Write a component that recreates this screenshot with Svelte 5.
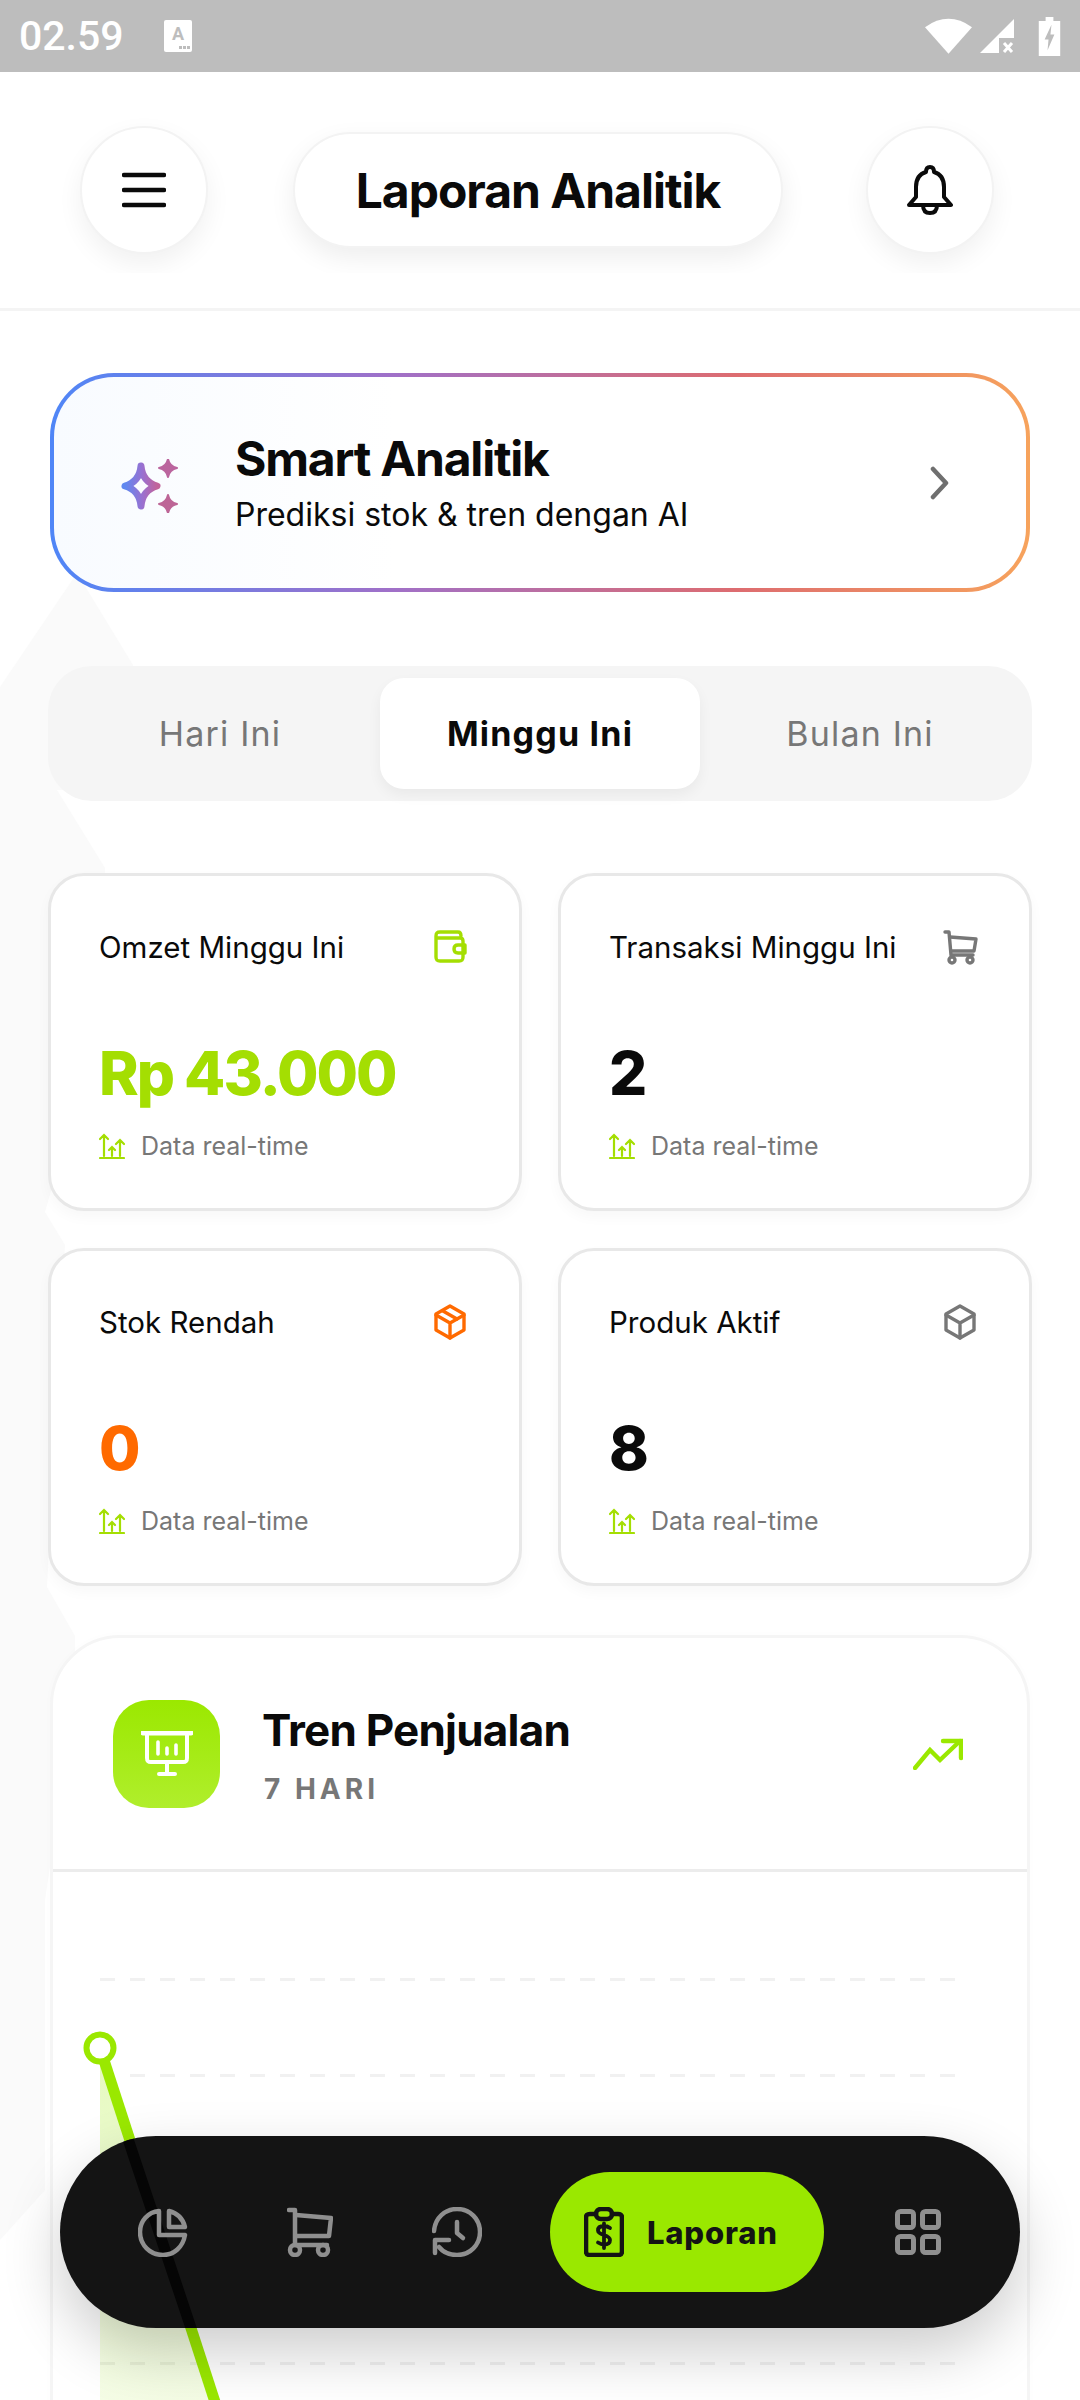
<script lang="ts">
	const tabs = ['Hari Ini', 'Minggu Ini', 'Bulan Ini'];
	const activeTab = 'Minggu Ini';

	const stats = [
		{ label: 'Omzet Minggu Ini', value: 'Rp 43.000', icon: 'wallet', tone: 'green' },
		{ label: 'Transaksi Minggu Ini', value: '2', icon: 'cart', tone: 'plain' },
		{ label: 'Stok Rendah', value: '0', icon: 'box-open', tone: 'orange' },
		{ label: 'Produk Aktif', value: '8', icon: 'box', tone: 'plain' }
	];

	const gridLines = [1, 2, 3, 4, 5];
</script>

<div class="page">
	<svg class="backdrop" viewBox="0 0 1080 2400" aria-hidden="true">
		<path d="M0 687 L77 573 L133 665 L133 790 L57 790 L105 868 L105 1000 L45 1212 L65 1245 L47 1587 L75 1636 L75 1700 L45 1900 L45 2190 L0 2240 Z" />
	</svg>

	<div class="statusbar">
		<span class="time">02.59</span>
		<svg class="sim" viewBox="0 0 28 32" aria-hidden="true">
			<rect width="28" height="32" rx="2" fill="#fff" />
			<text x="14" y="20" text-anchor="middle" class="sim-a">A</text>
			<rect x="15" y="26" width="3" height="3" fill="#bdbdbd" />
			<rect x="19" y="26" width="3" height="3" fill="#bdbdbd" />
			<rect x="23" y="26" width="3" height="3" fill="#bdbdbd" />
		</svg>
		<span class="spacer"></span>
		<svg class="wifi" viewBox="0 0 48 36" aria-hidden="true">
			<path d="M0 9 Q24 -8 48 9 L24 36 Z" fill="#fff" />
		</svg>
		<svg class="signal" viewBox="0 0 34 34" aria-hidden="true">
			<path d="M0 34 L34 0 V19 H19 V34 Z" fill="#fff" />
			<path d="M24 24 L32 33 M32 24 L24 33" stroke="#fff" stroke-width="3" />
		</svg>
		<svg class="battery" viewBox="0 0 22 40" aria-hidden="true">
			<path d="M7 0 H15 V4 H22 V40 H0 V4 H7 Z" fill="#fff" />
			<path d="M13 8 L6 23 H10 L9 34 L16 18 H12 Z" fill="#bdbdbd" />
		</svg>
	</div>

	<header>
		<div class="header-row">
			<button class="round" aria-label="Menu">
				<svg viewBox="0 0 44 36" width="44" height="36" aria-hidden="true">
					<path d="M2 3 H42 M2 18 H42 M2 33 H42" stroke="#0a0a0a" stroke-width="4.5" stroke-linecap="round" />
				</svg>
			</button>
			<div class="title-pill">Laporan Analitik</div>
			<button class="round" aria-label="Notifikasi">
				<svg viewBox="0 0 46 50" width="46" height="50" aria-hidden="true" fill="none" stroke="#0a0a0a" stroke-width="4" stroke-linejoin="round" stroke-linecap="round">
					<path d="M23 2 C26 2 27 4 27 7 C34 9 37 15 37 22 V32 L44 40 H2 L9 32 V22 C9 15 12 9 19 7 C19 4 20 2 23 2 Z" />
					<path d="M16 40 C16 46 19 48 23 48 C27 48 30 46 30 40" />
				</svg>
			</button>
		</div>
	</header>

	<main>
		<section class="smart">
			<div class="smart-inner">
				<svg class="sparkles" viewBox="0 0 60 54" width="60" height="54" aria-hidden="true">
					<defs>
						<linearGradient id="spark" x1="0" y1="0" x2="1" y2="0">
							<stop offset="0" stop-color="#5f88f0" />
							<stop offset="0.55" stop-color="#9a70d0" />
							<stop offset="1" stop-color="#c2639a" />
						</linearGradient>
					</defs>
					<path fill="none" stroke="url(#spark)" stroke-width="7" stroke-linejoin="round" stroke-linecap="round" d="M21 7 C22 18 27 24 37 27 C27 30 22 36 21 47 C20 36 15 30 5 27 C15 24 20 18 21 7 Z" />
					<path fill="#bb659e" d="M48 0 C49 5 52 8 57 9 C52 10 49 13 48 18 C47 13 44 10 39 9 C44 8 47 5 48 0 Z" stroke="#bb659e" stroke-width="2" stroke-linejoin="round" />
					<path fill="#bd6596" d="M48 36 C49 41 52 44 57 45 C52 46 49 49 48 54 C47 49 44 46 39 45 C44 44 47 41 48 36 Z" stroke="#bd6596" stroke-width="2" stroke-linejoin="round" />
				</svg>
				<div class="smart-text">
					<h2>Smart Analitik</h2>
					<p>Prediksi stok &amp; tren dengan AI</p>
				</div>
				<svg class="chevron" viewBox="0 0 20 34" width="20" height="34" aria-hidden="true">
					<path d="M3 3 L16 17 L3 31" fill="none" stroke="#6f6f6f" stroke-width="4.5" stroke-linecap="round" stroke-linejoin="round" />
				</svg>
			</div>
		</section>

		<div class="tabs">
			{#each tabs as tab}
				<button class="tab" class:active={tab === activeTab}>{tab}</button>
			{/each}
		</div>

		<div class="stats">
			{#each stats as stat}
				<article class="stat">
					<div class="stat-top">
						<span class="stat-label">{stat.label}</span>
						<svg class="stat-icon {stat.tone}" viewBox="0 0 36 36" width="36" height="36" aria-hidden="true" fill="none" stroke="currentColor" stroke-width="3.4" stroke-linejoin="round" stroke-linecap="round">
							{#if stat.icon === 'wallet'}
								<path d="M4 7 V28 C4 31 5 32 8 32 H27 C30 32 31 31 31 28 V12 C31 10 30 9 28 9 H6 C5 9 4 8 4 7 C4 4 5 3 8 3 H26 C28 3 29 4 29 7" />
								<path d="M33 16 H26 C23 16 22 18 22 20 C22 22 23 24 26 24 H33 Z" />
							{:else if stat.icon === 'cart'}
								<path d="M3 3 H7 L9 26 H31" />
								<path d="M8 8 L34 10 L32 22 H9" />
								<circle cx="10" cy="31" r="3" />
								<circle cx="28" cy="31" r="3" />
							{:else if stat.icon === 'box-open'}
								<path d="M18 2 L32 10 V26 L18 34 L4 26 V10 Z" />
								<path d="M4 11 L18 19 L32 11 M18 19 V34" />
								<path d="M11 7 L25 15" />
							{:else}
								<path d="M18 2 L32 10 V26 L18 34 L4 26 V10 Z" />
								<path d="M4 11 L18 19 L32 11 M18 19 V34" />
							{/if}
						</svg>
					</div>
					<div class="stat-value {stat.tone}">{stat.value}</div>
					<div class="stat-note">
						<svg viewBox="0 0 26 26" width="26" height="26" aria-hidden="true" fill="none" stroke="#a4de02" stroke-width="2.2" stroke-linecap="round">
							<path d="M1 25 H25 M5 23 V2 M1 6 L5 2 L9 6 M13 23 V14 M10 17 L13 14 L16 17 M21 23 V7 M17 11 L21 7 L25 11" />
						</svg>
						<span>Data real-time</span>
					</div>
				</article>
			{/each}
		</div>

		<section class="chart-card">
			<div class="chart-head">
				<div class="chart-tile">
					<svg viewBox="0 0 52 46" width="52" height="46" aria-hidden="true" fill="none" stroke="#fff" stroke-width="4" stroke-linecap="round" stroke-linejoin="round">
						<path d="M2 2 H50" stroke-width="5" />
						<path d="M6 3 V27 C6 30 7 31 10 31 H42 C45 31 46 30 46 27 V3" />
						<path d="M26 31 V42 M18 43 H34" />
						<path d="M17 11 V23 M26 17 V23 M35 14 V23" stroke-width="3.6" />
					</svg>
				</div>
				<div class="chart-title">
					<h2>Tren Penjualan</h2>
					<span>7 HARI</span>
				</div>
				<svg class="trend" viewBox="0 0 50 32" width="50" height="32" aria-hidden="true" fill="none" stroke="#9ae800" stroke-width="4.4" stroke-linecap="round">
					<path d="M2 30 L17 12 L27 22 L47 3" />
					<path d="M30 3 H48 V20" />
				</svg>
			</div>
			<div class="chart-body">
				<div class="grid-lines">
					{#each gridLines as line}
						<div class="grid-line"></div>
					{/each}
				</div>
				<svg class="plot" viewBox="0 0 220 530" width="220" height="530" aria-hidden="true">
					<defs>
						<linearGradient id="area" x1="0" y1="0" x2="0" y2="1">
							<stop offset="0" stop-color="#9ae800" stop-opacity="0.25" />
							<stop offset="1" stop-color="#9ae800" stop-opacity="0.1" />
						</linearGradient>
					</defs>
					<path d="M47 176 L162 530 H47 Z" fill="url(#area)" />
					<path d="M47 176 L162 530" stroke="#9ae800" stroke-width="11" fill="none" />
					<circle cx="47" cy="176" r="13.500" fill="#fff" stroke="#9ae800" stroke-width="6" />
				</svg>
			</div>
		</section>
	</main>

	<nav>
		<svg class="nav-line" viewBox="0 0 960 192" aria-hidden="true">
			<path d="M66 -3 L132 195" stroke="#050505" stroke-width="11" fill="none" />
		</svg>
		<button class="nav-item" aria-label="Ringkasan">
			<svg viewBox="0 0 50 50" width="50" height="50" aria-hidden="true" fill="none" stroke="#8f8f8f" stroke-width="4.5" stroke-linecap="round" stroke-linejoin="round">
				<path d="M21 4 C10 5 2 14 2 25 C2 38 12 48 25 48 C36 48 45 40 47 28 H21 Z" />
				<path d="M31 4 C39 6 45 12 47 20 H31 Z" />
			</svg>
		</button>
		<button class="nav-item" aria-label="Kasir">
			<svg viewBox="0 0 46 50" width="46" height="50" aria-hidden="true" fill="none" stroke="#8f8f8f" stroke-width="4.5" stroke-linecap="round" stroke-linejoin="round">
				<path d="M2 3 H8 L8 38 H40" />
				<path d="M9 8 L44 11 L42 29 H9" />
				<circle cx="8" cy="43" r="5" />
				<circle cx="36" cy="43" r="5" />
			</svg>
		</button>
		<button class="nav-item" aria-label="Riwayat">
			<svg viewBox="0 0 50 50" width="50" height="50" aria-hidden="true" fill="none" stroke="#8f8f8f" stroke-width="4.5" stroke-linecap="round" stroke-linejoin="round">
				<path d="M2 24 C3 11 13 2 25 2 C38 2 48 12 48 25 C48 38 38 48 25 48 C18 48 11 45 7 40" />
				<path d="M3 46 V33 H17" />
				<path d="M25 15 V26 L31 31" />
			</svg>
		</button>
		<button class="nav-active">
			<svg viewBox="0 0 40 50" width="40" height="50" aria-hidden="true" fill="none" stroke="#141414" stroke-width="4.6" stroke-linecap="round" stroke-linejoin="round">
				<path d="M12 7 H6 C3 7 2 8 2 11 V44 C2 47 3 48 6 48 H34 C37 48 38 47 38 44 V11 C38 8 37 7 34 7 H28" />
				<rect x="12" y="2" width="16" height="10" rx="5" />
				<path d="M26 21 C24 19.500 22 19 20 19 C16.500 19 14 20.500 14 23.500 C14 29 26 27 26 33 C26 36 23.500 37.500 20 37.500 C17.500 37.500 15.500 36.500 14 35.500 M20 16.500 V41" stroke-width="3.8" />
			</svg>
			<span>Laporan</span>
		</button>
		<button class="nav-item" aria-label="Lainnya">
			<svg viewBox="0 0 46 46" width="46" height="46" aria-hidden="true" fill="none" stroke="#8f8f8f" stroke-width="5" stroke-linejoin="round">
				<rect x="2.500" y="2.500" width="16" height="16" rx="3" />
				<rect x="27.500" y="2.500" width="16" height="16" rx="3" />
				<rect x="2.500" y="27.500" width="16" height="16" rx="3" />
				<rect x="27.500" y="27.500" width="16" height="16" rx="3" />
			</svg>
		</button>
	</nav>
</div>

<style>
	:global(body) {
		margin: 0;
		background: #fff;
	}

	.page {
		position: relative;
		width: 1080px;
		height: 2400px;
		overflow: hidden;
		background: #fff;
		font-family: Inter, 'Liberation Sans', sans-serif;
		color: #0a0a0a;
	}

	.backdrop {
		position: absolute;
		inset: 0;
		width: 1080px;
		height: 2400px;
	}

	.backdrop path {
		fill: #fafafa;
	}

	button {
		font-family: inherit;
		border: none;
		padding: 0;
		cursor: pointer;
	}

	.statusbar {
		position: relative;
		display: flex;
		align-items: center;
		height: 72px;
		padding: 0 19px;
		box-sizing: border-box;
		background: #bdbdbd;
		color: #fff;
	}

	.time {
		font-family: Roboto, sans-serif;
		font-size: 41px;
		font-weight: 500;
		line-height: 1;
	}

	.sim {
		width: 28px;
		height: 32px;
		margin-left: 40px;
	}

	.sim-a {
		font-family: Roboto, sans-serif;
		font-size: 18px;
		font-weight: 700;
		fill: #bdbdbd;
	}

	.spacer {
		flex: 1;
	}

	.wifi {
		width: 47px;
		height: 36px;
	}

	.signal {
		width: 34px;
		height: 34px;
		margin-left: 8px;
	}

	.battery {
		width: 23px;
		height: 39px;
		margin-left: 24px;
	}

	header {
		position: relative;
		height: 239px;
		box-sizing: border-box;
		border-bottom: 3px solid #f4f4f4;
	}

	.header-row {
		display: flex;
		align-items: center;
		justify-content: space-between;
		height: 201px;
		padding: 35px 86px 0 80px;
		box-sizing: border-box;
		overflow: hidden;
	}

	.round {
		flex: none;
		display: flex;
		align-items: center;
		justify-content: center;
		width: 128px;
		height: 128px;
		border-radius: 50%;
		background: #fff;
		border: 2px solid #f3f3f3;
		box-shadow: 0 10px 26px rgba(0, 0, 0, 0.06);
	}

	.title-pill {
		width: 490px;
		height: 116px;
		margin-left: 2px;
		box-sizing: border-box;
		display: flex;
		align-items: center;
		justify-content: center;
		border-radius: 58px;
		background: #fff;
		border: 2px solid #f3f3f3;
		box-shadow: 0 10px 26px rgba(0, 0, 0, 0.07);
		font-size: 48px;
		font-weight: 700;
		letter-spacing: -1px;
	}

	main {
		position: relative;
		padding: 62px 48px 0;
	}

	.smart {
		margin: 0 2px;
		height: 219px;
		padding: 4px;
		box-sizing: border-box;
		border-radius: 64px;
		background: linear-gradient(90deg, #4f86f7 0%, #a070c8 35%, #dd6c70 70%, #f7a35c 100%);
	}

	.smart-inner {
		display: flex;
		align-items: center;
		height: 100%;
		padding: 0 76px 0 66px;
		box-sizing: border-box;
		border-radius: 60px;
		background: linear-gradient(90deg, #f8fbff 0%, #fff 35%);
	}

	.sparkles {
		flex: none;
		margin-top: 6px;
	}

	.smart-text {
		flex: 1;
		margin-left: 55px;
	}

	.smart-text h2 {
		margin: 0;
		font-size: 48px;
		line-height: 56px;
		font-weight: 700;
		letter-spacing: -1.2px;
	}

	.smart-text p {
		margin: 8px 0 0;
		font-size: 32px;
		line-height: 40px;
	}

	.tabs {
		display: grid;
		grid-template-columns: 1fr 320px 1fr;
		gap: 0;
		margin-top: 74px;
		height: 135px;
		padding: 12px;
		box-sizing: border-box;
		border-radius: 44px;
		background: #f5f5f5;
	}

	.tab {
		background: transparent;
		font-size: 34px;
		letter-spacing: 1.2px;
		color: #777;
		border-radius: 24px;
	}

	.tab.active {
		background: #fff;
		color: #0a0a0a;
		font-weight: 700;
		box-shadow: 0 6px 14px rgba(0, 0, 0, 0.05);
	}

	.stats {
		display: grid;
		grid-template-columns: 474px 474px;
		gap: 37px 36px;
		margin-top: 72px;
	}

	.stat {
		height: 338px;
		padding: 53px 51px 0 48px;
		box-sizing: border-box;
		background: #fff;
		border: 3px solid #e8e8e8;
		border-radius: 36px;
		box-shadow: 0 6px 14px rgba(0, 0, 0, 0.03);
	}

	.stat-top {
		display: flex;
		align-items: center;
		justify-content: space-between;
		height: 36px;
	}

	.stat-label {
		font-size: 29.500px;
		white-space: nowrap;
	}

	.stat-icon {
		flex: none;
		color: #777;
	}

	.stat-icon.green {
		color: #a4de02;
	}

	.stat-icon.orange {
		color: #ff6a00;
	}

	.stat-value {
		margin-top: 70px;
		font-size: 60px;
		line-height: 76px;
		font-weight: 800;
		letter-spacing: -2px;
	}

	.stat-value.green {
		color: #a4de02;
	}

	.stat-value.orange {
		color: #ff6a00;
	}

	.stat-note {
		display: flex;
		align-items: center;
		gap: 16px;
		margin-top: 20px;
		font-size: 25px;
		color: #777;
	}

	.chart-card {
		margin: 49px 2px 0;
		height: 900px;
		background: #fff;
		border: 3px solid #f5f5f5;
		border-radius: 70px 70px 0 0;
		box-sizing: border-box;
		box-shadow: 0 0 8px rgba(0, 0, 0, 0.015);
	}

	.chart-head {
		display: flex;
		align-items: center;
		height: 234px;
		padding: 0 60px;
		box-sizing: border-box;
		border-bottom: 3px solid #ececec;
	}

	.chart-tile {
		flex: none;
		display: flex;
		align-items: center;
		justify-content: center;
		width: 107px;
		height: 108px;
		margin-top: 1px;
		border-radius: 36px;
		background: linear-gradient(180deg, #9be800 0%, #b0ee2c 100%);
	}

	.chart-title {
		flex: 1;
		margin-left: 42px;
	}

	.chart-title h2 {
		margin: 0;
		font-size: 44px;
		line-height: 54px;
		font-weight: 700;
		letter-spacing: -0.8px;
	}

	.chart-title span {
		display: block;
		margin-top: 16px;
		margin-left: 2px;
		font-size: 28px;
		line-height: 32px;
		font-weight: 700;
		letter-spacing: 4px;
		color: #777;
	}

	.trend {
		flex: none;
		margin-right: 4px;
	}

	.chart-body {
		position: relative;
	}

	.grid-lines {
		padding: 106px 71px 0 47px;
	}

	.grid-line {
		height: 96px;
		box-sizing: border-box;
		background: repeating-linear-gradient(90deg, #f1f1f1 0 15px, transparent 15px 30px) top / 100% 3px no-repeat;
	}

	.grid-line:nth-child(2) {
		margin-left: 30px;
	}

	.plot {
		position: absolute;
		left: 0;
		top: 0;
	}

	nav {
		position: absolute;
		left: 60px;
		top: 2136px;
		width: 960px;
		height: 192px;
		display: flex;
		align-items: center;
		box-sizing: border-box;
		padding-left: 78px;
		border-radius: 96px;
		background: #141414;
		box-shadow: 0 24px 60px rgba(0, 0, 0, 0.2);
	}

	.nav-line {
		position: absolute;
		inset: 0;
		width: 960px;
		height: 192px;
		border-radius: 96px;
	}

	.nav-item {
		position: relative;
		flex: none;
		display: flex;
		align-items: center;
		justify-content: center;
		width: 50px;
		height: 50px;
		margin-right: 97px;
		background: transparent;
	}

	.nav-active {
		position: relative;
		flex: none;
		display: flex;
		align-items: center;
		gap: 23px;
		width: 274px;
		height: 120px;
		margin-left: -29px;
		margin-right: 69px;
		padding-left: 34px;
		box-sizing: border-box;
		border-radius: 60px;
		background: #9ae800;
		color: #141414;
		font-size: 31px;
		font-weight: 800;
		letter-spacing: 0.8px;
	}
</style>
